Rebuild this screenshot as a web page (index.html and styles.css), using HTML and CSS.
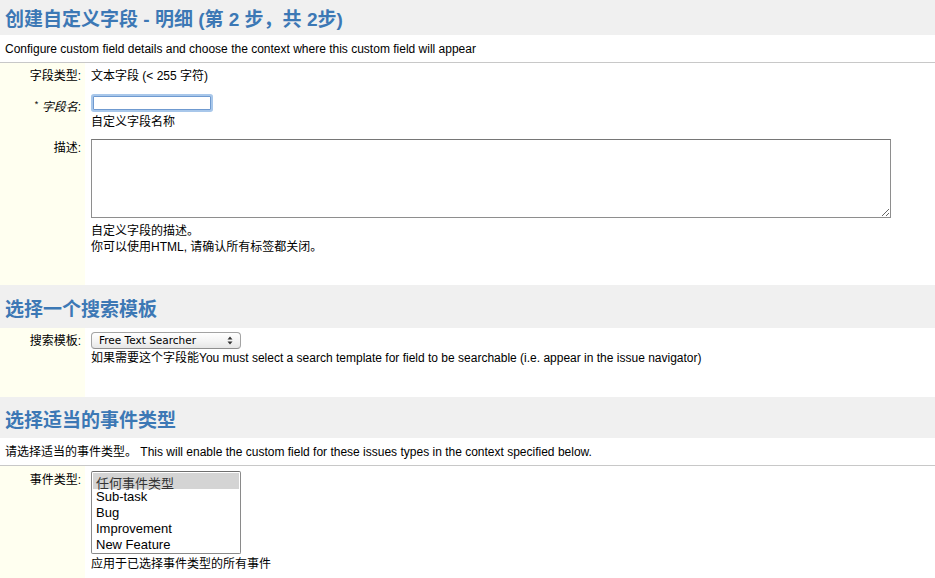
FILE: index.html
```html
<!DOCTYPE html>
<html lang="zh-CN">
<head>
<meta charset="utf-8">
<title>创建自定义字段 - 明细</title>
<link rel="stylesheet" href="styles.css">
</head>
<body>
<form class="page">
  <section class="section">
    <h2 class="title title-first">创建自定义字段 - 明细 (第 2 步，共 2步)</h2>
    <p class="desc desc-first">Configure custom field details and choose the context where this custom field will appear</p>
    <div class="form form-details">
      <div class="lbl">字段类型:</div>
      <div class="val">文本字段 (&lt; 255 字符)</div>

      <div class="lbl lbl-name"><sup class="req">*</sup> <em>字段名</em>:</div>
      <div class="val">
        <input class="text-input" type="text">
        <div class="help help-name">自定义字段名称</div>
      </div>

      <div class="lbl lbl-top1">描述:</div>
      <div class="val">
        <textarea class="textarea"></textarea>
        <div class="help help-desc">自定义字段的描述。<br>你可以使用HTML, 请确认所有标签都关闭。</div>
      </div>
    </div>
  </section>

  <section class="section">
    <h2 class="title title-mid">选择一个搜索模板</h2>
    <div class="form form-search">
      <div class="lbl lbl-top1">搜索模板:</div>
      <div class="val">
        <span class="popup">
          <select class="popup-select">
            <option>Free Text Searcher</option>
          </select>
          <svg class="popup-arrows" width="6" height="9" viewBox="0 0 6 9"><path d="M3 0.5 L5.5 3.5 H0.5 Z M3 8.5 L5.5 5.5 H0.5 Z" fill="#333"/></svg>
        </span>
        <div class="help help-search">如果需要这个字段能You must select a search template for field to be searchable (i.e. appear in the issue navigator)</div>
      </div>
    </div>
  </section>

  <section class="section">
    <h2 class="title title-last">选择适当的事件类型</h2>
    <p class="desc desc-last">请选择适当的事件类型。 This will enable the custom field for these issues types in the context specified below.</p>
    <div class="form form-types">
      <div class="lbl lbl-top1">事件类型:</div>
      <div class="val">
        <select class="listbox" multiple size="5">
          <option class="opt-any" selected>任何事件类型</option>
          <option>Sub-task</option>
          <option>Bug</option>
          <option>Improvement</option>
          <option>New Feature</option>
        </select>
        <div class="help help-types">应用于已选择事件类型的所有事件</div>
      </div>
    </div>
  </section>
</form>
</body>
</html>
```

FILE: styles.css
```css
html, body {
  margin: 0;
  padding: 0;
  background: #fff;
}
body {
  font-family: "Liberation Sans", "Noto Sans CJK SC", sans-serif;
  font-size: 12px;
  line-height: 16px;
  color: #000;
  height: 578px;
  overflow: hidden;
}
.page {
  margin: 0;
}
.section {
  margin: 0;
}
.title {
  margin: 0;
  padding: 0 5px;
  background: #f0f0f0;
  color: #3c78b5;
  font-family: "Liberation Sans", "Noto Sans CJK SC", sans-serif;
  font-weight: bold;
  font-size: 19px;
}
.title-first {
  height: 30px;
  padding-top: 5px;
  line-height: 30px;
}
.title-mid {
  height: 36px;
  padding-top: 7px;
  line-height: 36px;
}
.title-last {
  height: 34px;
  padding-top: 7px;
  line-height: 34px;
}
.desc {
  margin: 0;
  padding: 6px 5px 5px;
  border-bottom: 1px solid #c8c8c8;
}
.form {
  display: grid;
  grid-template-columns: 85px 1fr;
  row-gap: 10px;
  background: linear-gradient(90deg, #fffff0 85px, #fff 85px);
}
.form-details {
  padding: 5px 0 30px;
}
.form-search {
  padding: 4px 0 31px;
}
.form-types {
  padding: 5px 0 8px;
}
.lbl {
  text-align: right;
  padding-right: 4px;
  white-space: nowrap;
}
.lbl em {
  font-style: italic;
}
.lbl-name {
  padding-top: 5px;
}
.lbl-top1 {
  padding-top: 1px;
}
.req {
  font-size: 9px;
  line-height: 0;
  vertical-align: 4px;
}
.val {
  padding-left: 6px;
  min-width: 0;
}
.help-name {
  margin-top: 4px;
  margin-bottom: -1px;
}
.help-desc {
  margin-top: 5px;
}
.help-search {
  margin-top: 1px;
}
.help-types {
  margin-top: 2px;
}
.text-input {
  display: block;
  box-sizing: border-box;
  width: 118px;
  height: 14px;
  margin: 2px 0 0 2px;
  padding: 0 2px;
  border: 1px solid #6f9ad0;
  border-radius: 1px;
  box-shadow: 0 0 0 2px #a8c7ea;
  background: #fff;
  outline: none;
  font: 11px "Liberation Sans", sans-serif;
}
.textarea {
  display: block;
  box-sizing: border-box;
  width: 800px;
  height: 79px;
  margin: 0;
  padding: 2px;
  border: 1px solid #8e8e8e;
  border-top-color: #767676;
  background: #fff;
  font: 12px "Liberation Sans", sans-serif;
  resize: both;
}
.popup {
  position: relative;
  display: block;
  width: 150px;
  height: 17px;
}
.popup-select {
  -webkit-appearance: none;
  appearance: none;
  box-sizing: border-box;
  display: block;
  width: 150px;
  height: 17px;
  margin: 0;
  padding: 0 0 0 7px;
  border: 1px solid #a3a3a3;
  border-bottom-color: #8f8f8f;
  border-radius: 4px;
  background: linear-gradient(#ffffff, #f2f2f2 60%, #e6e6e6);
  color: #000;
  font-family: "DejaVu Sans", sans-serif;
  font-size: 10.5px;
  line-height: 15px;
}
.popup-arrows {
  position: absolute;
  right: 8px;
  top: 4px;
}
.listbox {
  display: block;
  box-sizing: border-box;
  width: 150px;
  height: 83px;
  margin: 0;
  padding: 1px;
  border: 1px solid #8a8a8a;
  border-top-color: #6f6f6f;
  background: #fff;
  font-family: "Liberation Sans", "Noto Sans CJK SC", sans-serif;
  font-size: 13px;
  overflow: hidden;
  outline: none;
}
.listbox option {
  height: 16px;
  line-height: 16px;
  padding: 0 3px;
  color: #000;
}
.listbox option.opt-any {
  color: #333;
}
.listbox option:checked {
  background: linear-gradient(#d4d4d4, #d4d4d4);
  color: #333;
}
```
